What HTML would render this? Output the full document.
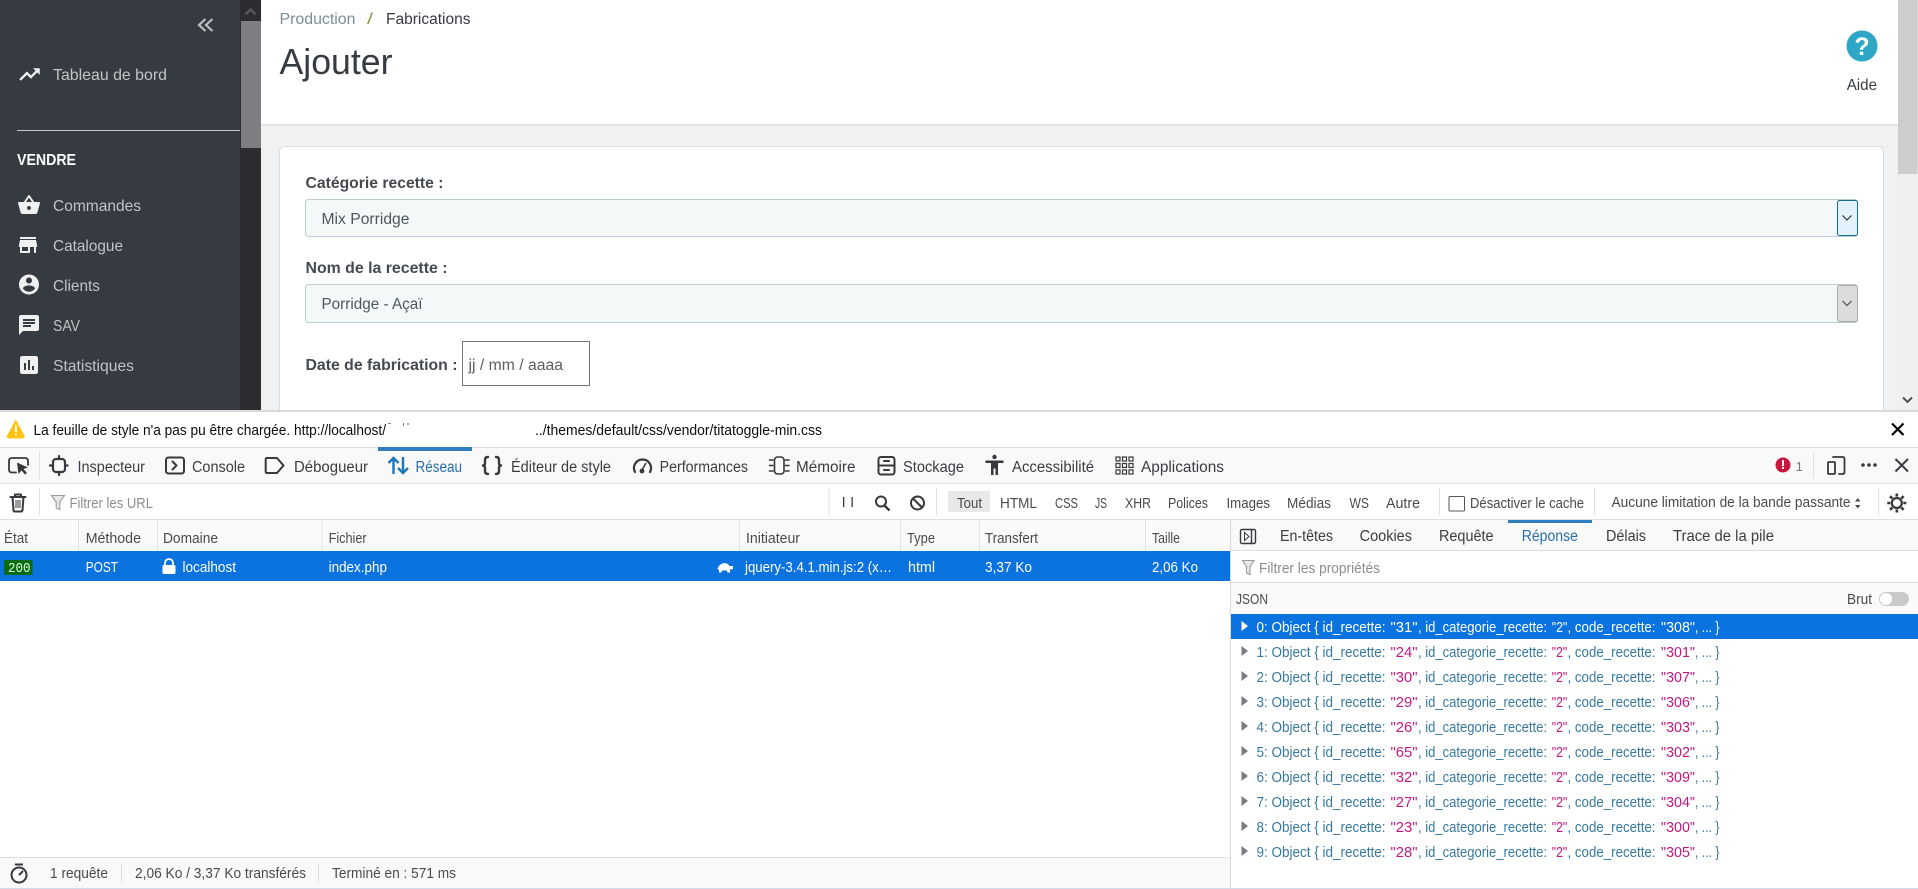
<!DOCTYPE html>
<html lang="fr"><head><meta charset="utf-8"><title>Ajouter</title>
<style>
html,body{margin:0;padding:0;width:1918px;height:889px;overflow:hidden;background:#fff}
svg{display:block}
text{font-family:"Liberation Sans",sans-serif;font-size:14px;fill:#38383d}
.s{fill:#c3c4c6;font-size:16px}
.m{fill:#363a41;font-size:15.500px}
.b{font-weight:700;fill:#444a50;font-size:15.500px}
.g{fill:#0c0c0d;font-size:14.500px}
.d{fill:#3c3c42;font-size:15.500px}
.f{fill:#8d8d92;font-size:14.500px}
.h{fill:#4a4a4f;font-size:14.500px}
.w{fill:#fff;font-size:14.500px}
.j{fill:#37799f;font-size:14.500px}
.v{fill:#c2187f;font-size:14.500px}
.x{fill:#fff;font-size:14.500px}
.ic{fill:none;stroke:#38383d;stroke-width:1.800;stroke-linecap:round;stroke-linejoin:round}
</style></head><body>
<svg xmlns="http://www.w3.org/2000/svg" width="1918" height="889" viewBox="0 0 1918 889">
<!-- top page -->
<rect width="1918" height="410" fill="#eff1f2"/>
<rect x="261" width="1637" height="124" fill="#fff"/>
<rect x="261" y="124" width="1637" height="1.500" fill="#dfe3e5"/>
<!-- sidebar -->
<rect width="240" height="410" fill="#363a41"/>
<rect x="240" width="21" height="410" fill="#2b2d31"/>
<rect x="241" y="21" width="20" height="127" fill="#7e7f83"/>
<path d="M245.500 14.500 L250.500 9.500 L255.500 14.500" fill="none" stroke="#55575b" stroke-width="2.500"/>
<path d="M205.500 19 L199 25 L205.500 31 M212.500 19 L206 25 L212.500 31" fill="none" stroke="#bfc0c2" stroke-width="2.200"/>
<path transform="translate(17.500,62.500)" fill="#f0f0f1" stroke="#f0f0f1" stroke-width=".5" d="M16 6l2.290 2.290-4.880 4.880-4-4L2 16.590 3.410 18l6-6 4 4 6.300-6.290L22 12V6z"/>
<text class="s" x="53" y="80" textLength="114" lengthAdjust="spacingAndGlyphs">Tableau de bord</text>
<rect x="17" y="130" width="223" height="1" fill="#c3c4c6"/>
<text x="17" y="165" textLength="59" lengthAdjust="spacingAndGlyphs" style="fill:#fff;font-weight:700;font-size:15.500px">VENDRE</text>
<path transform="translate(17,193)" fill="#f0f0f1" d="M17.210 9l-4.380-6.560c-.19-.28-.51-.42-.83-.42-.32 0-.64.14-.83.43L6.790 9H2c-.55 0-1 .45-1 1 0 .09.01.18.04.27l2.540 9.270c.23.84 1 1.460 1.920 1.460h13c.92 0 1.690-.62 1.930-1.460l2.540-9.270L23 10c0-.55-.45-1-1-1h-4.790zM9 9l3-4.400L15 9H9zm3 8c-1.100 0-2-.9-2-2s.9-2 2-2 2 .9 2 2-.9 2-2 2z"/>
<text class="s" x="53" y="211" textLength="88" lengthAdjust="spacingAndGlyphs">Commandes</text>
<path transform="translate(16,233)" fill="#f0f0f1" d="M20 4H4v2h16V4zm1 10v-2l-1-5H4l-1 5v2h1v6h10v-6h4v6h2v-6h1zm-9 4H6v-4h6v4z"/>
<text class="s" x="53" y="251" textLength="70" lengthAdjust="spacingAndGlyphs">Catalogue</text>
<path transform="translate(17,272.500)" fill="#f0f0f1" d="M12 2C6.480 2 2 6.480 2 12s4.480 10 10 10 10-4.480 10-10S17.520 2 12 2zm0 3c1.660 0 3 1.340 3 3s-1.340 3-3 3-3-1.340-3-3 1.340-3 3-3zm0 14.200c-2.500 0-4.710-1.280-6-3.220.03-1.990 4-3.080 6-3.080 1.990 0 5.970 1.090 6 3.080-1.290 1.940-3.500 3.220-6 3.220z"/>
<text class="s" x="53" y="291" textLength="47" lengthAdjust="spacingAndGlyphs">Clients</text>
<path transform="translate(17,313)" fill="#f0f0f1" d="M20 2H4c-1.100 0-1.990.9-1.990 2L2 22l4-4h14c1.100 0 2-.9 2-2V4c0-1.100-.9-2-2-2zM6 9h12v2H6V9zm8 5H6v-2h8v2zm4-6H6V6h12v2z"/>
<text class="s" x="53" y="331" textLength="27" lengthAdjust="spacingAndGlyphs">SAV</text>
<path transform="translate(17,353)" fill="#f0f0f1" d="M19 3H5c-1.100 0-2 .9-2 2v14c0 1.100.9 2 2 2h14c1.100 0 2-.9 2-2V5c0-1.100-.9-2-2-2zM9 17H7v-7h2v7zm4 0h-2V7h2v10zm4 0h-2v-4h2v4z"/>
<text class="s" x="53" y="371" textLength="81" lengthAdjust="spacingAndGlyphs">Statistiques</text>
<!-- head -->
<text class="m" x="279.500" y="24" textLength="76" lengthAdjust="spacingAndGlyphs" style="fill:#7d8f95">Production</text>
<text class="m" x="367" y="24" textLength="6" lengthAdjust="spacingAndGlyphs" style="fill:#8a9a4a">/</text>
<text class="m" x="386" y="24" textLength="84.500" lengthAdjust="spacingAndGlyphs">Fabrications</text>
<text x="279.500" y="74" textLength="113" lengthAdjust="spacingAndGlyphs" style="font-size:36px;fill:#363a41">Ajouter</text>
<circle cx="1862" cy="46" r="15.500" fill="#2ea7c6"/>
<text x="1862" y="55" text-anchor="middle" style="font-size:25px;font-weight:700;fill:#fff">?</text>
<text class="m" x="1846.700" y="90" textLength="30.300" lengthAdjust="spacingAndGlyphs" style="font-size:16px">Aide</text>
<!-- card -->
<rect x="279.500" y="146.500" width="1604" height="290" rx="5" fill="#fff" stroke="#d5dfe2"/>
<text class="b" x="305.500" y="188" textLength="138" lengthAdjust="spacingAndGlyphs">Catégorie recette :</text>
<rect x="305.500" y="199.500" width="1552" height="37" rx="3" fill="#f5f8f9" stroke="#bbcdd2"/>
<text class="m" x="321.500" y="224" textLength="88" lengthAdjust="spacingAndGlyphs" style="fill:#4c585d">Mix Porridge</text>
<rect x="1837.500" y="200.500" width="20" height="35" rx="2" fill="#e3f1fc" stroke="#1a6a90"/>
<path d="M1842.500 215.500 L1847 220 L1851.500 215.500" fill="none" stroke="#223" stroke-width="1.100"/>
<text class="b" x="305.500" y="273" textLength="142" lengthAdjust="spacingAndGlyphs">Nom de la recette :</text>
<rect x="305.500" y="284.500" width="1552" height="38" rx="3" fill="#f5f8f9" stroke="#bbcdd2"/>
<text class="m" x="321.500" y="309" textLength="101" lengthAdjust="spacingAndGlyphs" style="fill:#4c585d">Porridge - Açaï</text>
<rect x="1837.500" y="285.500" width="20" height="36" rx="2" fill="#dcdcdc" stroke="#aaa"/>
<path d="M1842.500 301 L1847 305.500 L1851.500 301" fill="none" stroke="#444" stroke-width="1.100"/>
<text class="b" x="305.500" y="370" textLength="152" lengthAdjust="spacingAndGlyphs">Date de fabrication :</text>
<rect x="462.500" y="341.500" width="127" height="44" fill="#fff" stroke="#767676"/>
<text class="m" x="468.500" y="370" textLength="94.500" lengthAdjust="spacingAndGlyphs" style="fill:#5a5f63">jj / mm / aaaa</text>
<!-- page scrollbar -->
<rect x="1898" width="20" height="410" fill="#f0f0f0"/>
<rect x="1898" width="19.500" height="174" fill="#cdcdcd"/>
<path d="M1903 397.500 L1907.500 402 L1912 397.500" fill="none" stroke="#505050" stroke-width="2"/>
<!-- devtools base -->
<rect y="410" width="1918" height="479" fill="#fff"/>
<rect y="410" width="1918" height="2" fill="#d9d9d9"/>
<!-- notification -->
<path d="M15.800 420.500 L24 436 Q24.500 438 22.500 438 L9 438 Q7 438 7.500 436 Z" fill="#ffc30f" stroke="#ffc30f" stroke-linejoin="round"/>
<rect x="15" y="425" width="1.800" height="7" fill="#fff"/><rect x="15" y="433.500" width="1.800" height="2" fill="#fff"/>
<text class="g" x="33.500" y="435" textLength="352.500" lengthAdjust="spacingAndGlyphs">La feuille de style n'a pas pu être chargée. http://localhost/</text>
<rect x="388" y="423" width="3" height="1" fill="#888"/><rect x="403" y="423" width="1" height="3" fill="#777"/><rect x="407" y="423" width="2" height="2" fill="#aaa"/>
<text class="g" x="535" y="435" textLength="287" lengthAdjust="spacingAndGlyphs">../themes/default/css/vendor/titatoggle-min.css</text>
<path d="M1892 423.500 L1903.500 435 M1903.500 423.500 L1892 435" stroke="#000" stroke-width="2.200" fill="none"/>
<rect y="447" width="1918" height="1" fill="#dcdcdf"/>
<!-- tab bar -->
<rect y="448" width="1918" height="35" fill="#f9f9fa"/>
<rect y="483" width="1918" height="1" fill="#e0e0e2"/>
<rect x="39" y="451" width="1" height="28" fill="#e0e0e2"/>
<path class="ic" d="M16 472.500 H12 Q9 472.500 9 469.500 V461 Q9 458 12 458 H25 Q28 458 28 461 V465"/>
<path d="M17 462.500 L28 467.500 L23.500 469 L27 473 L25 474.500 L21.500 470.500 L18.500 474 Z" fill="#38383d"/>
<g class="ic" style="stroke-width:2.200"><rect x="53" y="459" width="12" height="13" rx="3"/><path d="M59 456 V459 M59 472 V475 M50 465.500 H53 M65 465.500 H67.500"/></g>
<text class="d" x="77.500" y="472" textLength="67.500" lengthAdjust="spacingAndGlyphs">Inspecteur</text>
<g class="ic" style="stroke-width:2"><rect x="166" y="457.500" width="18" height="16" rx="2.500"/><path d="M172.500 461.500 L176.500 465.500 L172.500 469.500"/></g>
<text class="d" x="192" y="472" textLength="53" lengthAdjust="spacingAndGlyphs">Console</text>
<path class="ic" style="stroke-width:2" d="M267 458 H277 L283.500 465.500 L277 473 H267 Q265.700 473 265.700 471.500 V459.500 Q265.700 458 267 458 Z"/>
<text class="d" x="294" y="472" textLength="74" lengthAdjust="spacingAndGlyphs">Débogueur</text>
<rect x="378" y="447" width="94" height="4" fill="#2f7fbe"/>
<g fill="none" stroke="#1f77bb" stroke-width="2.400"><path d="M393.500 474 V458 M388.500 463 L393.500 458 L398.500 463 M403 457 V473 M398 468 L403 473 L408 468"/></g>
<text class="d" x="415.500" y="472" textLength="46.500" lengthAdjust="spacingAndGlyphs" style="fill:#2a6ea6">Réseau</text>
<g class="ic" style="stroke-width:2.400"><path d="M488 457 Q485 457 485 460 V463 Q485 465.500 483 465.500 Q485 465.500 485 468 V471 Q485 474 488 474 M496 457 Q499 457 499 460 V463 Q499 465.500 501 465.500 Q499 465.500 499 468 V471 Q499 474 496 474"/></g>
<text class="d" x="511" y="472" textLength="100" lengthAdjust="spacingAndGlyphs">Éditeur de style</text>
<g class="ic" style="stroke-width:2.200"><path d="M635 472 A8.500 8.500 0 1 1 650 472"/></g><circle cx="642" cy="471" r="2.400" fill="#38383d"/><path d="M642 470 L646 463" stroke="#38383d" stroke-width="1.500"/>
<text class="d" x="659.600" y="472" textLength="88.400" lengthAdjust="spacingAndGlyphs">Performances</text>
<g class="ic" style="stroke-width:1.600"><rect x="774.500" y="457" width="9.500" height="17" rx="3"/><path d="M769.500 460 H773 M769.500 465.500 H773 M769.500 471 H773 M785.500 460 H789 M785.500 465.500 H789 M785.500 471 H789"/></g>
<text class="d" x="796" y="472" textLength="59.500" lengthAdjust="spacingAndGlyphs">Mémoire</text>
<g class="ic" style="stroke-width:2"><rect x="878.500" y="457" width="16" height="17.500" rx="2.500"/><path d="M878.500 465.500 H894.500 M884 461 H889 M884 470 H889"/></g>
<text class="d" x="903" y="472" textLength="61" lengthAdjust="spacingAndGlyphs">Stockage</text>
<circle cx="994.500" cy="457" r="2.200" fill="#38383d"/><path d="M985.500 460.500 H1003.500 V463 H998 V475 H995.500 V468.500 H993.500 V475 H991 V463 H985.500 Z" fill="#38383d"/>
<text class="d" x="1012" y="472" textLength="82" lengthAdjust="spacingAndGlyphs">Accessibilité</text>
<g fill="none" stroke="#38383d" stroke-width="1.200"><rect x="1116" y="457" width="4" height="4"/><rect x="1122.500" y="457" width="4" height="4"/><rect x="1129" y="457" width="4" height="4"/><rect x="1116" y="463.500" width="4" height="4"/><rect x="1122.500" y="463.500" width="4" height="4"/><rect x="1129" y="463.500" width="4" height="4"/><rect x="1116" y="470" width="4" height="4"/><rect x="1122.500" y="470" width="4" height="4"/><rect x="1129" y="470" width="4" height="4"/></g>
<text class="d" x="1141" y="472" textLength="83" lengthAdjust="spacingAndGlyphs">Applications</text>
<circle cx="1783" cy="465" r="7.500" fill="#c8173d"/><rect x="1782" y="460" width="2" height="6" fill="#fff"/><rect x="1782" y="467" width="2" height="2" fill="#fff"/>
<text x="1795.600" y="471" style="font-size:13px;fill:#7a7a7f">1</text>
<rect x="1813" y="453" width="1" height="25" fill="#e0e0e2"/>
<g class="ic"><rect x="1828" y="462" width="7" height="12" rx="1"/><path d="M1833 457 H1842.500 Q1844.500 457 1844.500 459 V472 Q1844.500 474 1842.500 474 H1839"/></g>
<circle cx="1863" cy="465" r="1.800" fill="#38383d"/><circle cx="1869" cy="465" r="1.800" fill="#38383d"/><circle cx="1875" cy="465" r="1.800" fill="#38383d"/>
<path d="M1895.500 459 L1908 471.500 M1908 459 L1895.500 471.500" stroke="#38383d" stroke-width="2" fill="none"/>
<!-- filter bar -->
<rect y="519" width="1918" height="1" fill="#e0e0e2"/>
<rect x="39" y="488" width="1" height="27" fill="#e0e0e2"/>
<g class="ic" style="stroke-width:2"><path d="M10.500 497 H25.500 M15 497 V494.500 H21 V497 M12.500 497 L13.500 510 Q13.600 511.500 15 511.500 H21 Q22.400 511.500 22.500 510 L23.500 497"/></g>
<path d="M16 500 V508 M18 500 V508 M20 500 V508" stroke="#38383d" stroke-width="1"/>
<path d="M51.500 495.500 H64.500 L59.800 502 V509.500 L56.200 508 V502 Z" fill="#e8e8ea" stroke="#9a9a9f" stroke-width="1.100"/>
<text class="f" x="69.500" y="508" textLength="83.500" lengthAdjust="spacingAndGlyphs">Filtrer les URL</text>
<rect x="828.500" y="488" width="1" height="27" fill="#e0e0e2"/>
<rect x="843" y="497" width="1.300" height="10" fill="#38383d"/><rect x="851.500" y="497" width="1.300" height="10" fill="#38383d"/>
<circle cx="881" cy="501.500" r="5" fill="none" stroke="#38383d" stroke-width="2"/><path d="M884.500 505.500 L889.500 510.500" stroke="#38383d" stroke-width="2.400"/>
<circle cx="917.500" cy="503" r="6.500" fill="none" stroke="#38383d" stroke-width="2"/><path d="M913 498.500 L922 507.500" stroke="#38383d" stroke-width="2"/>
<rect x="936" y="488" width="1" height="27" fill="#e0e0e2"/>
<rect x="948" y="491" width="42" height="21" fill="#e8e8e9"/>
<text class="h" x="957" y="508" textLength="25" lengthAdjust="spacingAndGlyphs">Tout</text>
<text class="h" x="1000" y="508" textLength="37" lengthAdjust="spacingAndGlyphs">HTML</text>
<text class="h" x="1055" y="508" textLength="23" lengthAdjust="spacingAndGlyphs">CSS</text>
<text class="h" x="1095" y="508" textLength="12" lengthAdjust="spacingAndGlyphs">JS</text>
<text class="h" x="1125" y="508" textLength="26" lengthAdjust="spacingAndGlyphs">XHR</text>
<text class="h" x="1168" y="508" textLength="40" lengthAdjust="spacingAndGlyphs">Polices</text>
<text class="h" x="1226.500" y="508" textLength="43.500" lengthAdjust="spacingAndGlyphs">Images</text>
<text class="h" x="1287" y="508" textLength="44" lengthAdjust="spacingAndGlyphs">Médias</text>
<text class="h" x="1349.500" y="508" textLength="19.500" lengthAdjust="spacingAndGlyphs">WS</text>
<text class="h" x="1386" y="508" textLength="34" lengthAdjust="spacingAndGlyphs">Autre</text>
<rect x="1439" y="488" width="1" height="27" fill="#e0e0e2"/>
<rect x="1449" y="496.500" width="15.500" height="14.500" rx="1" fill="#fff" stroke="#555"/>
<text class="h" x="1470" y="508" textLength="114" lengthAdjust="spacingAndGlyphs">Désactiver le cache</text>
<rect x="1594" y="488" width="1" height="27" fill="#e0e0e2"/>
<text class="h" x="1611.500" y="507" textLength="239" lengthAdjust="spacingAndGlyphs">Aucune limitation de la bande passante</text>
<path d="M1855 501.500 L1857.800 498 L1860.500 501.500 Z M1855 505 L1857.800 508.500 L1860.500 505 Z" fill="#4a4a4f"/>
<rect x="1878" y="488" width="1" height="27" fill="#e0e0e2"/>
<circle cx="1896.800" cy="503" r="5" fill="none" stroke="#38383d" stroke-width="2.200"/>
<path d="M1896.800 493.500 V496.500 M1896.800 509.500 V512.500 M1887.300 503 H1890.300 M1903.300 503 H1906.300 M1890 496.200 L1892.300 498.500 M1901.300 507.500 L1903.600 509.800 M1903.600 496.200 L1901.300 498.500 M1892.300 507.500 L1890 509.800" stroke="#38383d" stroke-width="2.600"/>
<!-- table header -->
<rect y="520" width="1230" height="31" fill="#fafafa"/>
<g fill="#e2e2e4"><rect x="78" y="520" width="1" height="31"/><rect x="157" y="520" width="1" height="31"/><rect x="321.500" y="520" width="1" height="31"/><rect x="739" y="520" width="1" height="31"/><rect x="900" y="520" width="1" height="31"/><rect x="979" y="520" width="1" height="31"/><rect x="1145" y="520" width="1" height="31"/></g>
<text class="h" x="4" y="543" textLength="24" lengthAdjust="spacingAndGlyphs">État</text>
<text class="h" x="85.700" y="543" textLength="55.300" lengthAdjust="spacingAndGlyphs">Méthode</text>
<text class="h" x="163" y="543" textLength="55" lengthAdjust="spacingAndGlyphs">Domaine</text>
<text class="h" x="328.600" y="543" textLength="38" lengthAdjust="spacingAndGlyphs">Fichier</text>
<text class="h" x="746" y="543" textLength="54" lengthAdjust="spacingAndGlyphs">Initiateur</text>
<text class="h" x="907" y="543" textLength="28" lengthAdjust="spacingAndGlyphs">Type</text>
<text class="h" x="985" y="543" textLength="53" lengthAdjust="spacingAndGlyphs">Transfert</text>
<text class="h" x="1152" y="543" textLength="28" lengthAdjust="spacingAndGlyphs">Taille</text>
<!-- selected row -->
<rect y="551" width="1230" height="30" fill="#0a73df"/>
<rect x="4" y="560" width="28.600" height="15" rx="2" fill="#0a6b14"/>
<text x="8" y="572" textLength="22.600" lengthAdjust="spacingAndGlyphs" style="font-family:'Liberation Mono',monospace;font-size:14px;fill:#d8ffd8">200</text>
<text class="w" x="85.700" y="572" textLength="32.300" lengthAdjust="spacingAndGlyphs">POST</text>
<rect x="162.500" y="565" width="13" height="9" rx="1.500" fill="#fff"/><path d="M165 565.500 V563 A4 4 0 0 1 173 563 V565.500" fill="none" stroke="#fff" stroke-width="1.800"/>
<text class="w" x="182.500" y="572" textLength="53.500" lengthAdjust="spacingAndGlyphs">localhost</text>
<text class="w" x="328.600" y="572" textLength="58.400" lengthAdjust="spacingAndGlyphs">index.php</text>
<path d="M717.500 569 Q719 564 724 563 Q728 563 729.500 566 L733 566 L733 569 L730 569.500 L730 572.500 L727.500 572.500 L727 570.500 L722 570.500 L721.500 572.500 L719 572.500 L719 570 Z" fill="#fff"/>
<text class="w" x="745" y="572" textLength="147" lengthAdjust="spacingAndGlyphs">jquery-3.4.1.min.js:2 (x…</text>
<text class="w" x="908" y="572" textLength="27" lengthAdjust="spacingAndGlyphs">html</text>
<text class="w" x="985" y="572" textLength="47" lengthAdjust="spacingAndGlyphs">3,37 Ko</text>
<text class="w" x="1152" y="572" textLength="46" lengthAdjust="spacingAndGlyphs">2,06 Ko</text>
<!-- status bar -->
<rect y="857" width="1230" height="32" fill="#f9f9fa"/>
<rect y="857" width="1230" height="1" fill="#dfdfe2"/>
<rect y="888" width="1230" height="1" fill="#cfdbe6"/>
<circle cx="19" cy="875" r="7.500" fill="none" stroke="#38383d" stroke-width="2"/><path d="M15 864.500 H23 M19 875 L23 871" stroke="#38383d" stroke-width="2" fill="none"/>
<text class="h" x="50" y="878" textLength="58" lengthAdjust="spacingAndGlyphs">1 requête</text>
<rect x="121" y="864" width="1" height="19" fill="#e0e0e2"/>
<text class="h" x="135" y="878" textLength="171" lengthAdjust="spacingAndGlyphs">2,06 Ko / 3,37 Ko transférés</text>
<rect x="318" y="864" width="1" height="19" fill="#e0e0e2"/>
<text class="h" x="332" y="878" textLength="124" lengthAdjust="spacingAndGlyphs">Terminé en : 571 ms</text>
<!-- right panel -->
<rect x="1230" y="520" width="1" height="369" fill="#d9d9dc"/>
<rect x="1231" y="520" width="687" height="30" fill="#f9f9fa"/>
<rect x="1231" y="550" width="687" height="1" fill="#e0e0e2"/>
<g fill="none" stroke="#38383d" stroke-width="1.400"><rect x="1240.500" y="529.500" width="15" height="14" rx="1.500"/><path d="M1251.500 529.500 V543.500"/></g><path d="M1244.500 532.500 L1249 536.500 L1244.500 540.500 Z" fill="none" stroke="#38383d"/>
<text class="d" x="1280" y="541" textLength="53" lengthAdjust="spacingAndGlyphs">En-têtes</text>
<text class="d" x="1359.600" y="541" textLength="52.400" lengthAdjust="spacingAndGlyphs">Cookies</text>
<text class="d" x="1439" y="541" textLength="54.500" lengthAdjust="spacingAndGlyphs">Requête</text>
<rect x="1508" y="520" width="84" height="3" fill="#2f7fbe"/>
<text class="d" x="1521.700" y="541" textLength="56.300" lengthAdjust="spacingAndGlyphs" style="fill:#2a6ea6">Réponse</text>
<text class="d" x="1606" y="541" textLength="40" lengthAdjust="spacingAndGlyphs">Délais</text>
<text class="d" x="1673" y="541" textLength="101" lengthAdjust="spacingAndGlyphs">Trace de la pile</text>
<path d="M1242.500 560.500 H1254 L1250 566.500 V574.500 L1246.500 573 V566.500 Z" fill="#e8e8ea" stroke="#9a9a9f" stroke-width="1.100"/>
<text class="f" x="1259" y="573" textLength="121" lengthAdjust="spacingAndGlyphs">Filtrer les propriétés</text>
<rect x="1231" y="582" width="687" height="1" fill="#e0e0e2"/>
<rect x="1231" y="583" width="687" height="31" fill="#fafafa"/>
<text class="h" x="1236" y="604" textLength="32" lengthAdjust="spacingAndGlyphs">JSON</text>
<text class="h" x="1847" y="604" textLength="25" lengthAdjust="spacingAndGlyphs">Brut</text>
<rect x="1879" y="592" width="30" height="14" rx="7" fill="#c9c9ca"/><circle cx="1886" cy="599" r="6" fill="#fff"/>
<!-- JSON rows -->
<rect x="1231" y="614" width="687" height="25" fill="#0a73df"/>
<path d="M1241.500 621 L1248 626 L1241.500 631 Z" fill="#fff"/>
<text class="x" x="1256.500" y="632" textLength="129" lengthAdjust="spacingAndGlyphs">0: Object { id_recette:</text><text class="x" x="1390.500" y="632" textLength="27" lengthAdjust="spacingAndGlyphs">"31"</text><text class="x" x="1418" y="632" textLength="129" lengthAdjust="spacingAndGlyphs">, id_categorie_recette:</text><text class="x" x="1551.700" y="632" textLength="15.600" lengthAdjust="spacingAndGlyphs">"2"</text><text class="x" x="1567.500" y="632" textLength="88" lengthAdjust="spacingAndGlyphs">, code_recette:</text><text class="x" x="1661" y="632" textLength="34" lengthAdjust="spacingAndGlyphs">"308"</text><text class="x" x="1695" y="632" textLength="24.500" lengthAdjust="spacingAndGlyphs">, ... }</text>
<g fill="#7a7a7f"><path d="M1241.500 646 L1248 651 L1241.500 656 Z"/><path d="M1241.500 671 L1248 676 L1241.500 681 Z"/><path d="M1241.500 696 L1248 701 L1241.500 706 Z"/><path d="M1241.500 721 L1248 726 L1241.500 731 Z"/><path d="M1241.500 746 L1248 751 L1241.500 756 Z"/><path d="M1241.500 771 L1248 776 L1241.500 781 Z"/><path d="M1241.500 796 L1248 801 L1241.500 806 Z"/><path d="M1241.500 821 L1248 826 L1241.500 831 Z"/><path d="M1241.500 846 L1248 851 L1241.500 856 Z"/></g>
<text class="j" x="1256.500" y="657" textLength="129" lengthAdjust="spacingAndGlyphs">1: Object { id_recette:</text><text class="v" x="1390.500" y="657" textLength="27" lengthAdjust="spacingAndGlyphs">"24"</text><text class="j" x="1418" y="657" textLength="129" lengthAdjust="spacingAndGlyphs">, id_categorie_recette:</text><text class="v" x="1551.700" y="657" textLength="15.600" lengthAdjust="spacingAndGlyphs">"2"</text><text class="j" x="1567.500" y="657" textLength="88" lengthAdjust="spacingAndGlyphs">, code_recette:</text><text class="v" x="1661" y="657" textLength="34" lengthAdjust="spacingAndGlyphs">"301"</text><text class="j" x="1695" y="657" textLength="24.500" lengthAdjust="spacingAndGlyphs">, ... }</text>
<text class="j" x="1256.500" y="682" textLength="129" lengthAdjust="spacingAndGlyphs">2: Object { id_recette:</text><text class="v" x="1390.500" y="682" textLength="27" lengthAdjust="spacingAndGlyphs">"30"</text><text class="j" x="1418" y="682" textLength="129" lengthAdjust="spacingAndGlyphs">, id_categorie_recette:</text><text class="v" x="1551.700" y="682" textLength="15.600" lengthAdjust="spacingAndGlyphs">"2"</text><text class="j" x="1567.500" y="682" textLength="88" lengthAdjust="spacingAndGlyphs">, code_recette:</text><text class="v" x="1661" y="682" textLength="34" lengthAdjust="spacingAndGlyphs">"307"</text><text class="j" x="1695" y="682" textLength="24.500" lengthAdjust="spacingAndGlyphs">, ... }</text>
<text class="j" x="1256.500" y="707" textLength="129" lengthAdjust="spacingAndGlyphs">3: Object { id_recette:</text><text class="v" x="1390.500" y="707" textLength="27" lengthAdjust="spacingAndGlyphs">"29"</text><text class="j" x="1418" y="707" textLength="129" lengthAdjust="spacingAndGlyphs">, id_categorie_recette:</text><text class="v" x="1551.700" y="707" textLength="15.600" lengthAdjust="spacingAndGlyphs">"2"</text><text class="j" x="1567.500" y="707" textLength="88" lengthAdjust="spacingAndGlyphs">, code_recette:</text><text class="v" x="1661" y="707" textLength="34" lengthAdjust="spacingAndGlyphs">"306"</text><text class="j" x="1695" y="707" textLength="24.500" lengthAdjust="spacingAndGlyphs">, ... }</text>
<text class="j" x="1256.500" y="732" textLength="129" lengthAdjust="spacingAndGlyphs">4: Object { id_recette:</text><text class="v" x="1390.500" y="732" textLength="27" lengthAdjust="spacingAndGlyphs">"26"</text><text class="j" x="1418" y="732" textLength="129" lengthAdjust="spacingAndGlyphs">, id_categorie_recette:</text><text class="v" x="1551.700" y="732" textLength="15.600" lengthAdjust="spacingAndGlyphs">"2"</text><text class="j" x="1567.500" y="732" textLength="88" lengthAdjust="spacingAndGlyphs">, code_recette:</text><text class="v" x="1661" y="732" textLength="34" lengthAdjust="spacingAndGlyphs">"303"</text><text class="j" x="1695" y="732" textLength="24.500" lengthAdjust="spacingAndGlyphs">, ... }</text>
<text class="j" x="1256.500" y="757" textLength="129" lengthAdjust="spacingAndGlyphs">5: Object { id_recette:</text><text class="v" x="1390.500" y="757" textLength="27" lengthAdjust="spacingAndGlyphs">"65"</text><text class="j" x="1418" y="757" textLength="129" lengthAdjust="spacingAndGlyphs">, id_categorie_recette:</text><text class="v" x="1551.700" y="757" textLength="15.600" lengthAdjust="spacingAndGlyphs">"2"</text><text class="j" x="1567.500" y="757" textLength="88" lengthAdjust="spacingAndGlyphs">, code_recette:</text><text class="v" x="1661" y="757" textLength="34" lengthAdjust="spacingAndGlyphs">"302"</text><text class="j" x="1695" y="757" textLength="24.500" lengthAdjust="spacingAndGlyphs">, ... }</text>
<text class="j" x="1256.500" y="782" textLength="129" lengthAdjust="spacingAndGlyphs">6: Object { id_recette:</text><text class="v" x="1390.500" y="782" textLength="27" lengthAdjust="spacingAndGlyphs">"32"</text><text class="j" x="1418" y="782" textLength="129" lengthAdjust="spacingAndGlyphs">, id_categorie_recette:</text><text class="v" x="1551.700" y="782" textLength="15.600" lengthAdjust="spacingAndGlyphs">"2"</text><text class="j" x="1567.500" y="782" textLength="88" lengthAdjust="spacingAndGlyphs">, code_recette:</text><text class="v" x="1661" y="782" textLength="34" lengthAdjust="spacingAndGlyphs">"309"</text><text class="j" x="1695" y="782" textLength="24.500" lengthAdjust="spacingAndGlyphs">, ... }</text>
<text class="j" x="1256.500" y="807" textLength="129" lengthAdjust="spacingAndGlyphs">7: Object { id_recette:</text><text class="v" x="1390.500" y="807" textLength="27" lengthAdjust="spacingAndGlyphs">"27"</text><text class="j" x="1418" y="807" textLength="129" lengthAdjust="spacingAndGlyphs">, id_categorie_recette:</text><text class="v" x="1551.700" y="807" textLength="15.600" lengthAdjust="spacingAndGlyphs">"2"</text><text class="j" x="1567.500" y="807" textLength="88" lengthAdjust="spacingAndGlyphs">, code_recette:</text><text class="v" x="1661" y="807" textLength="34" lengthAdjust="spacingAndGlyphs">"304"</text><text class="j" x="1695" y="807" textLength="24.500" lengthAdjust="spacingAndGlyphs">, ... }</text>
<text class="j" x="1256.500" y="832" textLength="129" lengthAdjust="spacingAndGlyphs">8: Object { id_recette:</text><text class="v" x="1390.500" y="832" textLength="27" lengthAdjust="spacingAndGlyphs">"23"</text><text class="j" x="1418" y="832" textLength="129" lengthAdjust="spacingAndGlyphs">, id_categorie_recette:</text><text class="v" x="1551.700" y="832" textLength="15.600" lengthAdjust="spacingAndGlyphs">"2"</text><text class="j" x="1567.500" y="832" textLength="88" lengthAdjust="spacingAndGlyphs">, code_recette:</text><text class="v" x="1661" y="832" textLength="34" lengthAdjust="spacingAndGlyphs">"300"</text><text class="j" x="1695" y="832" textLength="24.500" lengthAdjust="spacingAndGlyphs">, ... }</text>
<text class="j" x="1256.500" y="857" textLength="129" lengthAdjust="spacingAndGlyphs">9: Object { id_recette:</text><text class="v" x="1390.500" y="857" textLength="27" lengthAdjust="spacingAndGlyphs">"28"</text><text class="j" x="1418" y="857" textLength="129" lengthAdjust="spacingAndGlyphs">, id_categorie_recette:</text><text class="v" x="1551.700" y="857" textLength="15.600" lengthAdjust="spacingAndGlyphs">"2"</text><text class="j" x="1567.500" y="857" textLength="88" lengthAdjust="spacingAndGlyphs">, code_recette:</text><text class="v" x="1661" y="857" textLength="34" lengthAdjust="spacingAndGlyphs">"305"</text><text class="j" x="1695" y="857" textLength="24.500" lengthAdjust="spacingAndGlyphs">, ... }</text>
<rect x="1230" y="888" width="688" height="1" fill="#cfdbe6"/>
</svg>
</body></html>
